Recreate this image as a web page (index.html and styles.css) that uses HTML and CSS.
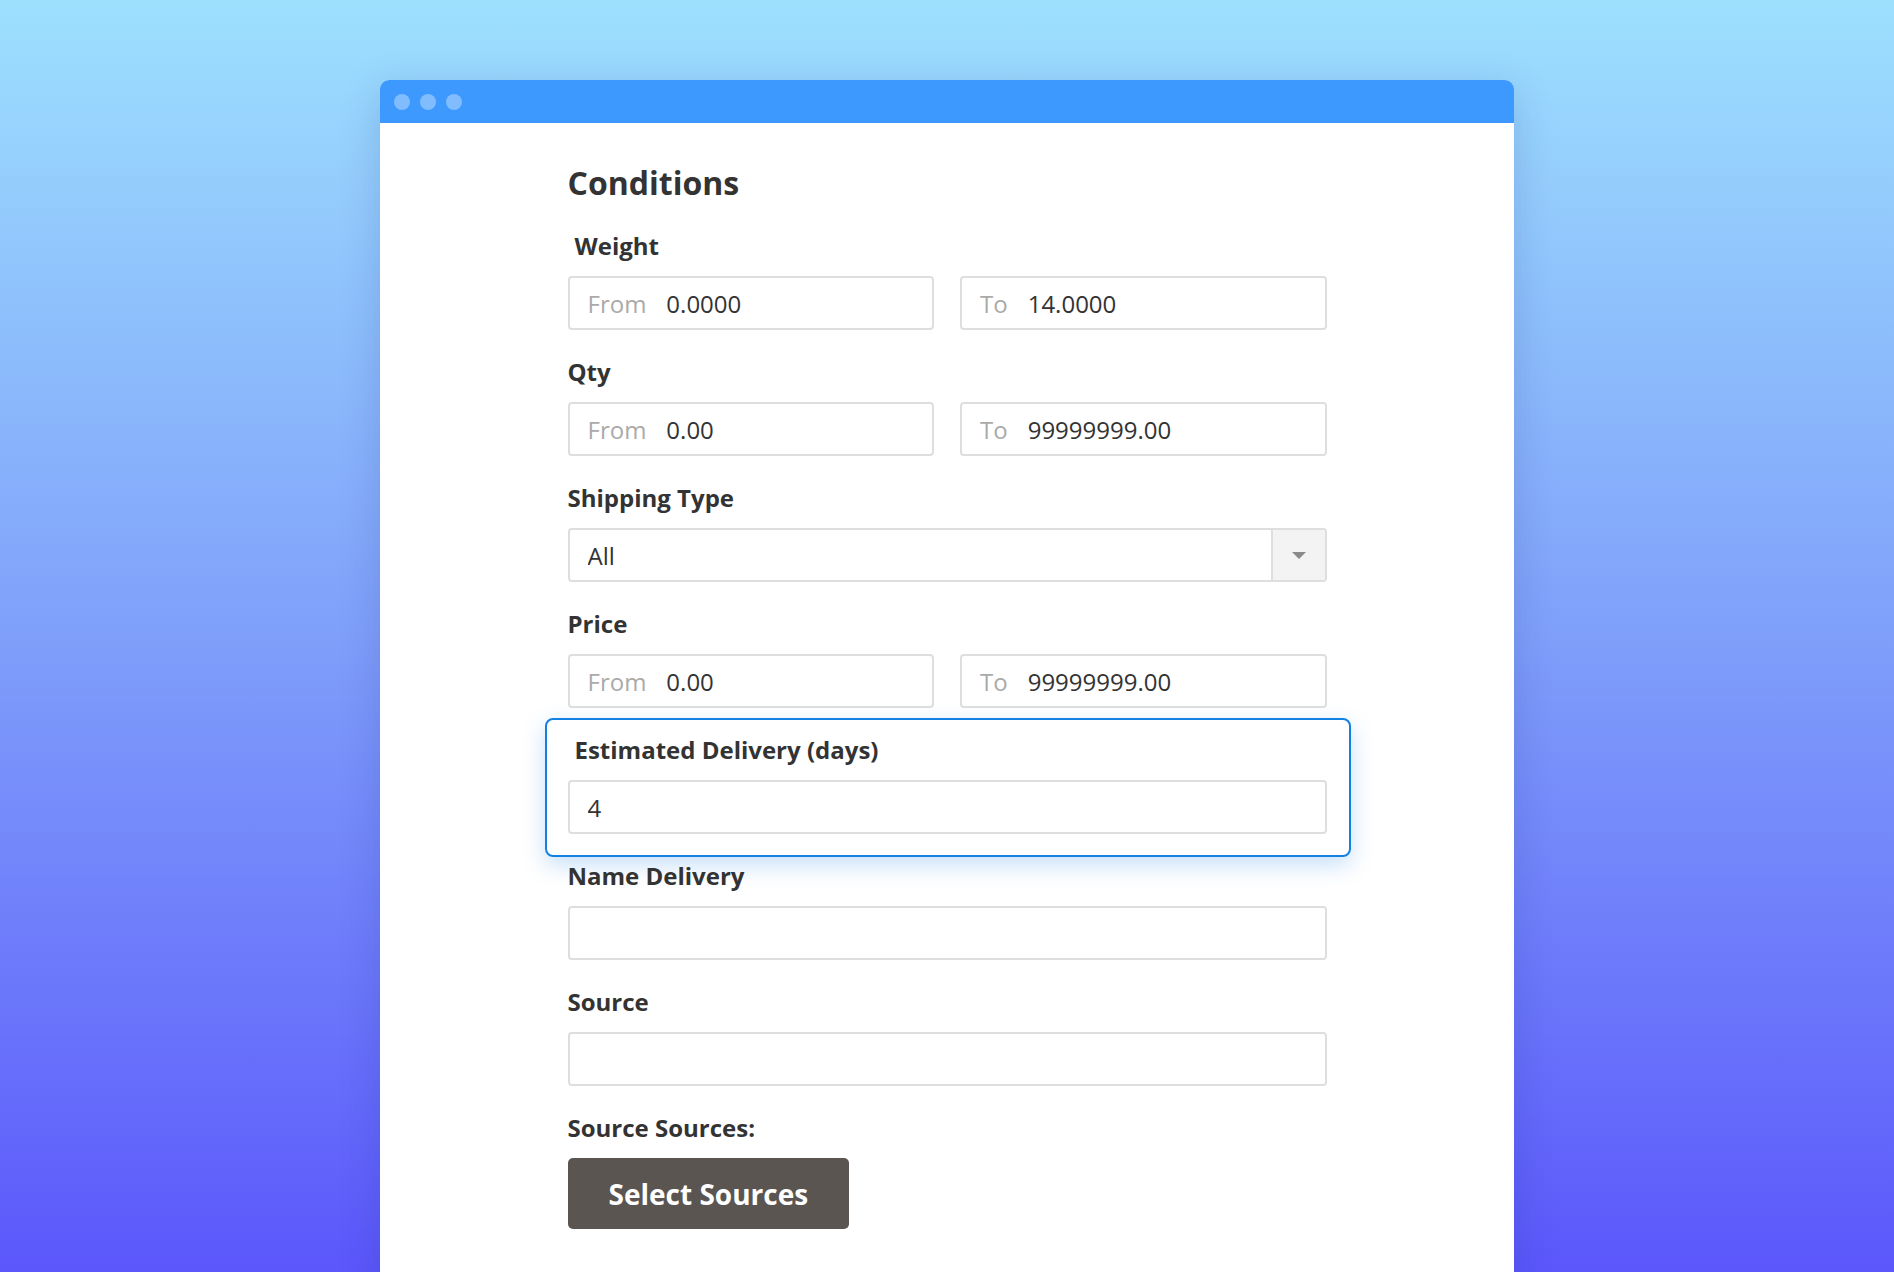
FILE: index.html
```html
<!DOCTYPE html>
<html lang="en">
<head>
    <meta charset="UTF-8">
    <meta name="viewport" content="width=device-width, initial-scale=1.0">
    <title>Conditions</title>
    <link rel="stylesheet" href="styles.css">
</head>
<body>

    <div class="window">
        <div class="window-bar">
            <span class="dot"></span>
            <span class="dot"></span>
            <span class="dot"></span>
        </div>

        <div class="window-body">
            <form class="conditions-form">
                <h1>Conditions</h1>

                <div class="fields">
                    <div class="field">
                        <label class="field-label indent">Weight</label>
                        <div class="range">
                            <div class="control">
                                <span class="addon">From</span>
                                <input type="text" name="weight_from" value="0.0000">
                            </div>
                            <div class="control">
                                <span class="addon">To</span>
                                <input type="text" name="weight_to" value="14.0000">
                            </div>
                        </div>
                    </div>

                    <div class="field">
                        <label class="field-label">Qty</label>
                        <div class="range">
                            <div class="control">
                                <span class="addon">From</span>
                                <input type="text" name="qty_from" value="0.00">
                            </div>
                            <div class="control">
                                <span class="addon">To</span>
                                <input type="text" name="qty_to" value="99999999.00">
                            </div>
                        </div>
                    </div>

                    <div class="field">
                        <label class="field-label" for="shippingType">Shipping Type</label>
                        <div class="control select-control">
                            <select id="shippingType" name="shipping_type">
                                <option value="all">All</option>
                            </select>
                            <span class="select-arrow"></span>
                        </div>
                    </div>

                    <div class="field">
                        <label class="field-label">Price</label>
                        <div class="range">
                            <div class="control">
                                <span class="addon">From</span>
                                <input type="text" name="price_from" value="0.00">
                            </div>
                            <div class="control">
                                <span class="addon">To</span>
                                <input type="text" name="price_to" value="99999999.00">
                            </div>
                        </div>
                    </div>

                    <div class="field highlight">
                        <label class="field-label indent" for="estDelivery">Estimated Delivery (days)</label>
                        <div class="control">
                            <input type="text" id="estDelivery" name="est_delivery" value="4">
                        </div>
                    </div>

                    <div class="field">
                        <label class="field-label" for="nameDelivery">Name Delivery</label>
                        <div class="control">
                            <input type="text" id="nameDelivery" name="name_delivery">
                        </div>
                    </div>

                    <div class="field">
                        <label class="field-label" for="source">Source</label>
                        <div class="control">
                            <input type="text" id="source" name="source">
                        </div>
                    </div>

                    <div class="field">
                        <label class="field-label">Source Sources:</label>
                        <div>
                            <button type="button" class="btn-select">Select Sources</button>
                        </div>
                    </div>
                </div>
            </form>
        </div>
    </div>

</body>
</html>
```

FILE: styles.css
```css
html, body {
    height: 100%;
    overflow: hidden;
}

body {
    margin: 0;
    font-family: "Open Sans", "Liberation Sans", Arial, sans-serif;
    color: #333;
    background: linear-gradient(180deg, #9de0fe 0%, #7f9ffa 50%, #5b57fb 100%);
}

/* fake browser window */
.window {
    width: 1134px;
    margin: 80px auto 0;
    background-color: #fff;
    border-radius: 9px 9px 0 0;
    box-shadow: 0 10px 40px rgba(20, 40, 120, 0.18);
}

.window-bar {
    height: 43px;
    display: flex;
    align-items: center;
    gap: 10px;
    padding-left: 14px;
    background-color: #3d99fe;
    border-radius: 9px 9px 0 0;
}

.dot {
    width: 16px;
    height: 16px;
    border-radius: 50%;
    background-color: rgba(255, 255, 255, 0.35);
}

.window-body {
    padding: 40px 0 120px;
}

.conditions-form {
    width: 759px;
    margin: 0 auto;
}

h1 {
    margin: 0 0 27px;
    font-size: 32px;
    line-height: 40px;
    font-weight: bold;
    color: #333;
}

.fields {
    display: flex;
    flex-direction: column;
    gap: 26px;
}

.field-label {
    display: block;
    margin-bottom: 14px;
    font-size: 24px;
    line-height: 32px;
    font-weight: bold;
    color: #333;
}

.field-label.indent {
    padding-left: 7px;
}

.range {
    display: grid;
    grid-template-columns: minmax(0, 1fr) minmax(0, 1fr);
    gap: 26px;
}

.control {
    display: flex;
    align-items: center;
    min-width: 0;
    height: 54px;
    padding-left: 18px;
    border: 2px solid #dedede;
    border-radius: 4px;
    box-sizing: border-box;
    background-color: #fff;
}

.addon {
    padding-right: 20px;
    font-size: 24px;
    color: #aaa;
}

.control input,
.control select {
    flex: 1;
    width: 0;
    min-width: 0;
    height: 100%;
    padding: 0;
    border: none;
    outline: none;
    background: transparent;
    font: inherit;
    font-size: 24px;
    color: #333;
}

.select-control select {
    appearance: none;
    -webkit-appearance: none;
}

.select-arrow {
    position: relative;
    width: 52px;
    height: 100%;
    border-left: 2px solid #dedede;
    border-radius: 0 3px 3px 0;
    background-color: #f3f3f3;
}

.select-arrow::after {
    content: "";
    position: absolute;
    left: 50%;
    top: 50%;
    margin: -3px 0 0 -7px;
    border-left: 7px solid transparent;
    border-right: 7px solid transparent;
    border-top: 7px solid #8a8a8a;
}

.highlight {
    margin: -16px -24px -23px -23px;
    padding: 14px 22px 21px 21px;
    border: 2px solid #1281e2;
    border-radius: 8px;
    box-shadow: 0 8px 22px rgba(30, 130, 230, 0.25);
}

.btn-select {
    height: 71px;
    padding: 0 41px;
    border: none;
    border-radius: 5px;
    background-color: #5b5552;
    color: #fff;
    font-family: inherit;
    font-size: 28px;
    font-weight: bold;
    cursor: pointer;
}
```
